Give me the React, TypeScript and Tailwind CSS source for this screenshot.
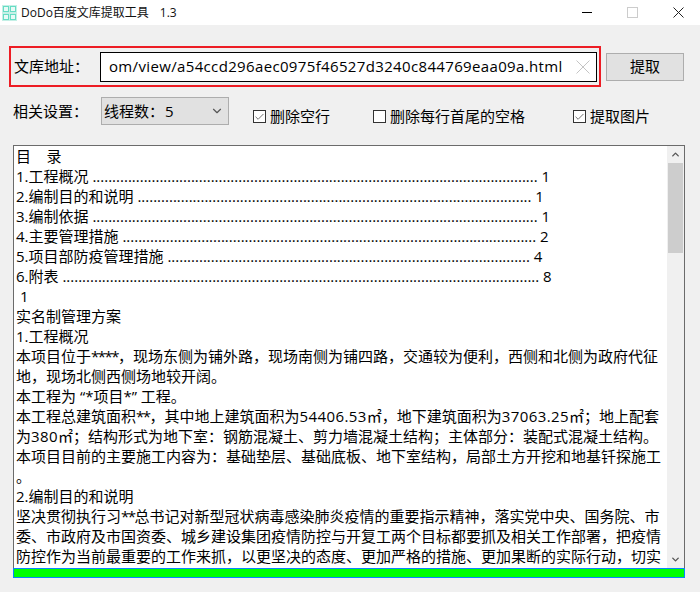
import { Check, ChevronDown, ChevronUp } from 'lucide-react'

const font = "font-['Open_Sans','Noto_Sans_CJK_SC',sans-serif]"

const dots = (n: number) => '.'.repeat(n)

const lines = [
  '目    录',
  `1.工程概况 ${dots(113)} 1`,
  `2.编制目的和说明 ${dots(100)} 1`,
  `3.编制依据 ${dots(113)} 1`,
  `4.主要管理措施 ${dots(105)} 2`,
  `5.项目部防疫管理措施 ${dots(92)} 4`,
  `6.附表 ${dots(121)} 8`,
  ' 1',
  '实名制管理方案',
  '1.工程概况',
  '本项目位于****，现场东侧为铺外路，现场南侧为铺四路，交通较为便利，西侧和北侧为政府代征',
  '地，现场北侧西侧场地较开阔。',
  '本工程为 “*项目*” 工程。',
  '本工程总建筑面积**，其中地上建筑面积为54406.53㎡，地下建筑面积为37063.25㎡；地上配套',
  '为380㎡；结构形式为地下室：钢筋混凝土、剪力墙混凝土结构；主体部分：装配式混凝土结构。',
  '本项目目前的主要施工内容为：基础垫层、基础底板、地下室结构，局部土方开挖和地基钎探施工',
  '。',
  '2.编制目的和说明',
  '坚决贯彻执行习**总书记对新型冠状病毒感染肺炎疫情的重要指示精神，落实党中央、国务院、市',
  '委、市政府及市国资委、城乡建设集团疫情防控与开复工两个目标都要抓及相关工作部署，把疫情',
  '防控作为当前最重要的工作来抓，以更坚决的态度、更加严格的措施、更加果断的实际行动，切实',
]

// the original font has wider digits and narrower asterisks than Open Sans
function LogLine({ text }: { text: string }) {
  const parts = text.split(/(\d{3,}[\d.]*|\*{2,})/)
  return (
    <div className="h-[20px]">
      {parts.map((p, i) => {
        if (/^\d{3}/.test(p)) return <span key={i} className="tracking-[0.4px]">{p}</span>
        if (p.startsWith('**')) return <span key={i} className="tracking-[-1.5px]">{p}</span>
        return <span key={i}>{p}</span>
      })}
    </div>
  )
}

function CheckItem({ label, checked }: { label: string; checked: boolean }) {
  return (
    <div className="flex items-center gap-[4px]">
      <div className="w-[13px] h-[13px] border border-[#333] bg-white flex items-center justify-center">
        {checked && <Check size={12} strokeWidth={1.5} color="#333" />}
      </div>
      <span>{label}</span>
    </div>
  )
}

export default function App() {
  return (
    <div className={`${font} w-[700px] h-[592px] bg-[#f0f0f0] text-[15px] text-black overflow-hidden`}>
      {/* title bar */}
      <div className="h-[25px] bg-white flex items-center pl-[2px] text-[12px] text-[#111]">
        <svg width="15" height="16" viewBox="0 0 15 16" className="shrink-0 mt-[1px]">
          <rect x="0" y="0" width="15" height="16" fill="#c4f0e6" />
          <rect x="1.5" y="1.5" width="5" height="5" fill="#e8faf6" stroke="#66dcc4" />
          <rect x="8.5" y="1.5" width="5" height="5" fill="#e8faf6" stroke="#66dcc4" />
          <rect x="1.5" y="9.5" width="5" height="5" fill="#e8faf6" stroke="#66dcc4" />
          <rect x="8.5" y="9.5" width="5" height="5" fill="#e8faf6" stroke="#66dcc4" />
        </svg>
        <span className="ml-[4px]">DoDo百度文库提取工具</span>
        <span className="ml-[11px]">1.3</span>
        <div className="ml-auto flex items-center pr-[16px] gap-[35px]">
          <svg width="10" height="11" viewBox="0 0 10 11"><path d="M0 5.5H10" stroke="#000" /></svg>
          <svg width="11" height="11" viewBox="0 0 11 11"><rect x="0.5" y="0.5" width="10" height="10" fill="none" stroke="#ccc" /></svg>
          <svg width="11" height="11" viewBox="0 0 11 11"><path d="M0.5 0.5L10.5 10.5M10.5 0.5L0.5 10.5" stroke="#222" /></svg>
        </div>
      </div>

      {/* address row */}
      <div className="mt-[21px] ml-[9px] flex items-center gap-[5px]">
        <div className="w-[592px] h-[41px] border-2 border-[#ed1c24] flex items-center pl-[3px]">
          <span className="w-[86px]">文库地址：</span>
          <div className="w-[497px] h-[30px] border border-black bg-white flex items-center pl-[8px] pr-[6px]">
            <span className="flex-1 whitespace-nowrap overflow-hidden tracking-[0.35px]">om/view/a54ccd296aec0975f46527d3240c844769eaa09a.html</span>
            <svg width="14" height="14" viewBox="0 0 14 14"><path d="M0.5 0.5L13.5 13.5M13.5 0.5L0.5 13.5" stroke="#c4c4c4" /></svg>
          </div>
        </div>
        <button className="w-[78px] h-[28px] border border-[#adadad] bg-[#e1e1e1] flex items-center justify-center">提取</button>
      </div>

      {/* settings row */}
      <div className="mt-[10px] ml-[13px] h-[28px] flex items-center">
        <span className="w-[88px]">相关设置：</span>
        <div className="w-[128px] h-[28px] border border-[#adadad] bg-[#e1e1e1] flex items-center pl-[2px] pr-[4px] justify-between">
          <span>线程数：<span className="ml-[1px]">5</span></span>
          <ChevronDown size={14} color="#555" />
        </div>
        <div className="ml-[24px] mt-[11px] flex items-center">
          <CheckItem label="删除空行" checked />
          <div className="ml-[43px]">
            <CheckItem label="删除每行首尾的空格" checked={false} />
          </div>
          <div className="ml-[48px]">
            <CheckItem label="提取图片" checked />
          </div>
        </div>
      </div>

      {/* log */}
      <div className="mt-[20px] ml-[13px] w-[672px] flex flex-col">
        <div className="h-[423px] border border-[#6b6b6b] border-b-0 bg-white flex">
          <div className="flex-1 pl-[2px] overflow-hidden leading-[20px] whitespace-pre">
            {lines.map((l, i) => (
              <LogLine key={i} text={l} />
            ))}
          </div>
          <div className="w-[17px] bg-[#f0f0f0] flex flex-col items-center">
            <div className="h-[17px] flex items-center justify-center">
              <ChevronUp size={11} color="#555" strokeWidth={3} />
            </div>
            <div className="w-[15px] h-[90px] bg-[#cdcdcd]" />
            <div className="flex-1" />
            <div className="h-[17px] flex items-center justify-center">
              <ChevronDown size={11} color="#555" strokeWidth={3} />
            </div>
          </div>
        </div>
        <div className="h-[10px] border border-[#0a84ff] bg-[#00ff00]" />
      </div>
    </div>
  )
}
